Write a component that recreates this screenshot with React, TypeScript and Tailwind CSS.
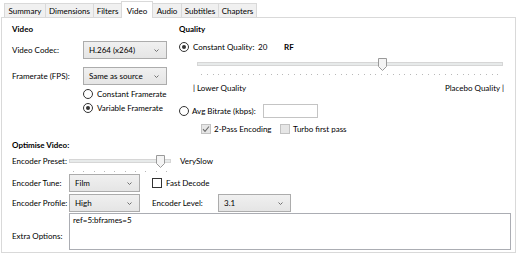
import React from "react";

function Radio({ checked }: { checked?: boolean }) {
  return (
    <span className="flex h-[10px] w-[10px] shrink-0 items-center justify-center rounded-full border border-[#333333] bg-white">
      {checked && <span className="h-[4px] w-[4px] rounded-full bg-[#333333]" />}
    </span>
  );
}

function Check({ variant }: { variant: "checkedDisabled" | "disabled" | "normal" }) {
  if (variant === "normal") {
    return <span className="block h-[10px] w-[10px] shrink-0 border border-[#333333] bg-white" />;
  }
  return (
    <span className="flex h-[10px] w-[10px] shrink-0 items-center justify-center border border-[#c2c2c2] bg-[#e6e6e6]">
      {variant === "checkedDisabled" && (
        <svg width="8" height="8" viewBox="0 0 8 8">
          <path d="M1 4.2 L3 6.3 L7 1.5" stroke="#6d6d6d" strokeWidth="1.1" fill="none" />
        </svg>
      )}
    </span>
  );
}

function Select({ value, className }: { value: string; className: string }) {
  return (
    <div
      className={
        "flex h-[18px] shrink-0 items-center justify-between border border-[#acacac] bg-linear-to-b from-[#f0f0f0] to-[#e5e5e5] pl-[5px] pr-[7px] " +
        className
      }
    >
      <span>{value}</span>
      <svg width="5" height="3" viewBox="0 0 5 3">
        <path d="M0.5 0.5 L2.5 2.5 L4.5 0.5" stroke="#707070" strokeWidth="1" fill="none" />
      </svg>
    </div>
  );
}

function Slider({
  className,
  ticks,
  thumbLeft,
}: {
  className: string;
  ticks: number;
  thumbLeft: number;
}) {
  return (
    <div className={"relative shrink-0 " + className}>
      <div className="absolute left-0 right-0 top-[4px] h-[4px] border border-[#d6d6d6] bg-[#e7eaea]" />
      <div className="absolute left-[4px] right-[4px] top-[16px] flex justify-between">
        {Array.from({ length: ticks }).map((_, i) => (
          <span key={i} className="block h-[1px] w-[1px] bg-[#b8b8b8]" />
        ))}
      </div>
      <svg
        className="absolute top-0"
        style={{ left: thumbLeft }}
        width="9"
        height="13"
        viewBox="0 0 9 13"
      >
        <path d="M0.5 0.5 H8.5 V8.5 L4.5 12.5 L0.5 8.5 Z" fill="#f4f4f4" stroke="#9a9a9a" />
      </svg>
    </div>
  );
}

const tabs = [
  { name: "Summary", w: "w-[42px]" },
  { name: "Dimensions", w: "w-[49px]" },
  { name: "Filters", w: "w-[29px]" },
  { name: "Video", w: "w-[32px]", active: true },
  { name: "Audio", w: "w-[30px]" },
  { name: "Subtitles", w: "w-[38px]" },
  { name: "Chapters", w: "w-[39px]" },
];

export default function App() {
  const qualityValue = 20;
  const qualityThumb = 4 + ((51 - qualityValue) / 51) * 298 - 4.5;
  return (
    <div className="h-[255px] w-[517px] overflow-hidden bg-white font-['Lato',sans-serif] text-[8px] leading-[12px] text-black">
      {/* Tabs */}
      <div className="flex h-[17px] items-end pl-[4px]">
        {tabs.map((t, i) =>
          t.active ? (
            <div
              key={t.name}
              className={`relative z-10 -mb-px flex h-[17px] items-start justify-center border border-b-0 border-[#d9d9d9] bg-white pt-[3px] ${t.w} ${i ? "-ml-px" : ""}`}
            >
              {t.name}
            </div>
          ) : (
            <div
              key={t.name}
              className={`flex h-[14px] items-center justify-center border border-b-0 border-[#d9d9d9] bg-[#f0f0f0] ${t.w} ${i ? "-ml-px" : ""}`}
            >
              {t.name}
            </div>
          )
        )}
      </div>

      {/* Panel */}
      <div className="ml-[1px] flex h-[236px] w-[515px] flex-col border border-[#d9d9d9]">
        <div className="flex">
          {/* Left column */}
          <div className="w-[177px] shrink-0 pl-[10px]">
            <div className="mt-[5px] h-[12px] font-bold">Video</div>
            <div className="mt-[6px] flex h-[18px] items-center">
              <span className="w-[71px] shrink-0">Video Codec:</span>
              <Select value="H.264 (x264)" className="w-[84px]" />
            </div>
            <div className="mt-[8px] flex h-[18px] items-center">
              <span className="w-[71px] shrink-0">Framerate (FPS):</span>
              <Select value="Same as source" className="w-[84px]" />
            </div>
            <div className="mt-[2px] flex h-[14px] items-center pl-[71px]">
              <Radio />
              <span className="ml-[4px]">Constant Framerate</span>
            </div>
            <div className="flex h-[14px] items-center pl-[71px]">
              <Radio checked />
              <span className="ml-[4px]">Variable Framerate</span>
            </div>
          </div>

          {/* Right column */}
          <div className="flex-1 pr-[11px]">
            <div className="mt-[5px] h-[12px] font-bold">Quality</div>
            <div className="mt-[5px] flex h-[14px] items-center">
              <Radio checked />
              <span className="ml-[4px] w-[65px] shrink-0">Constant Quality:</span>
              <span className="w-[26px] shrink-0">20</span>
              <span className="font-bold">RF</span>
            </div>
            <Slider className="ml-[18px] mt-[4px] h-[20px] w-[306px]" ticks={52} thumbLeft={qualityThumb} />
            <div className="mt-[4px] flex h-[12px] justify-between pl-[14px]">
              <span>| Lower Quality</span>
              <span>Placebo Quality |</span>
            </div>
            <div className="mt-[9px] flex h-[15px] items-center">
              <Radio />
              <span className="ml-[3px] w-[71px] shrink-0">Avg Bitrate (kbps):</span>
              <span className="block h-[14px] w-[55px] border border-[#c4c4c4] bg-white" />
            </div>
            <div className="mt-[5px] flex h-[12px] items-center pl-[22px]">
              <Check variant="checkedDisabled" />
              <span className="ml-[3px] w-[66px] shrink-0">2-Pass Encoding</span>
              <Check variant="disabled" />
              <span className="ml-[3px]">Turbo first pass</span>
            </div>
          </div>
        </div>

        {/* Optimise section */}
        <div className="pl-[10px]">
          <div className="mt-[4px] h-[12px] font-bold">Optimise Video:</div>
          <div className="mt-[3px] flex h-[14px] items-start">
            <span className="w-[57px] shrink-0 pt-[1px]">Encoder Preset:</span>
            <Slider className="mt-[1px] h-[13px] w-[102px]" ticks={10} thumbLeft={87} />
            <span className="ml-[9px] pt-[1px]">VerySlow</span>
          </div>
          <div className="mt-[6px] flex h-[18px] items-center">
            <span className="w-[57px] shrink-0">Encoder Tune:</span>
            <Select value="Film" className="w-[71px]" />
            <span className="ml-[12px]">
              <Check variant="normal" />
            </span>
            <span className="ml-[4px]">Fast Decode</span>
          </div>
          <div className="mt-[2px] flex h-[18px] items-center">
            <span className="w-[57px] shrink-0">Encoder Profile:</span>
            <Select value="High" className="w-[71px]" />
            <span className="ml-[12px] w-[66px] shrink-0">Encoder Level:</span>
            <Select value="3.1" className="w-[73px]" />
          </div>
          <div className="mt-[1px] flex h-[37px] items-start">
            <span className="w-[57px] shrink-0 pt-[17px]">Extra Options:</span>
            <div className="h-[37px] w-[442px] border border-[#abadb3] bg-white pl-[3px]">ref=5:bframes=5</div>
          </div>
        </div>
      </div>
    </div>
  );
}
